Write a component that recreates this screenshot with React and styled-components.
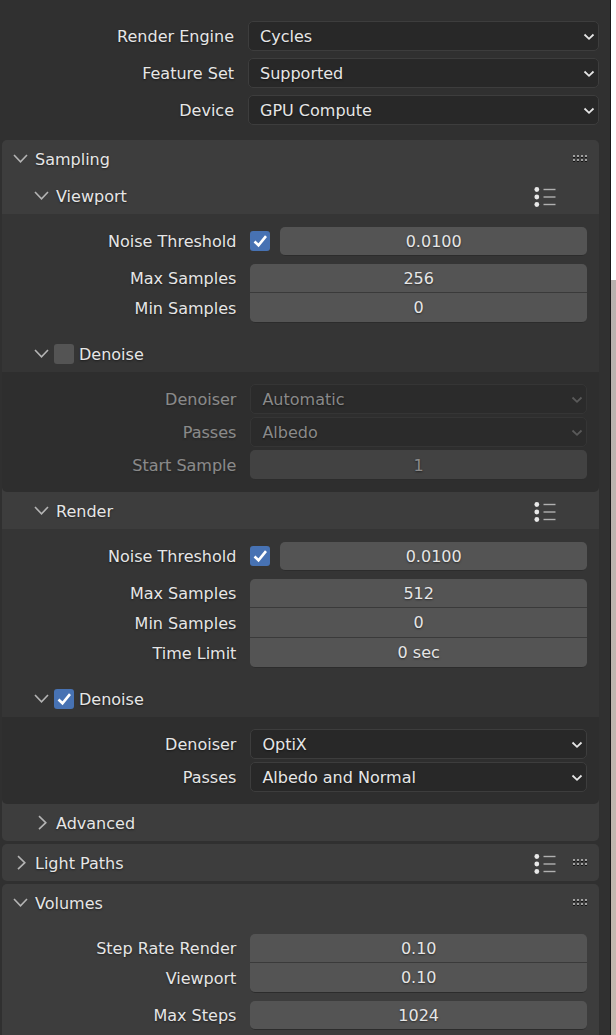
import React, { useId, useState } from "react";
import styled, { createGlobalStyle, css } from "styled-components";

const GlobalStyle = createGlobalStyle`
  *, *::before, *::after { box-sizing: border-box; }
  body {
    margin: 0;
    background: #303030;
    color: #e6e6e6;
    font: 16px/20px "DejaVu Sans", sans-serif;
    text-shadow: 0 1px 2px rgba(0, 0, 0, 0.5);
  }
  button, input, select { font: inherit; color: inherit; text-shadow: inherit; }
`;

const Window = styled.div`
  display: flex;
  height: 100vh;
`;

const Editor = styled.main`
  flex: 1;
  min-width: 0;
  overflow-y: auto;
  scrollbar-width: none;
  padding: 21px 11px 0 0;
`;

const Backdrop = styled.div`
  flex: none;
  width: 6px;
  border-left: 1px solid #1c1a1a;
  background: linear-gradient(#ffffff 280px, #b9b1ae 280px, #c4b8ae);
`;

const Settings = styled.div`
  display: flex;
  flex-direction: column;
  gap: 7px;
  margin-bottom: 15px;
`;

const Panels = styled.div`
  display: flex;
  flex-direction: column;
  gap: 3px;
  padding-left: 2px;
`;

const Panel = styled.section`
  background: #3d3d3d;
  border-radius: 5px;
`;

const Header = styled.header`
  display: flex;
  align-items: center;
  height: 37px;
  padding-left: ${(p) => (p.$nested ? 30 : 9)}px;
  padding-right: 11px;
`;

const Toggle = styled.button`
  display: flex;
  align-items: center;
  gap: 6px;
  padding: 0;
  border: 0;
  background: none;
  cursor: pointer;
`;

const Title = styled.span`
  padding-top: 2px;
`;

const Tools = styled.div`
  display: flex;
  align-items: center;
  gap: 16px;
  margin-left: auto;
  padding-right: ${(p) => (p.$inset ? 31 : 0)}px;
`;

const IconButton = styled.button`
  display: flex;
  padding: 2px 0 0;
  border: 0;
  background: none;
  cursor: pointer;
`;

const HeaderCheck = styled.label`
  display: flex;
  align-items: center;
  gap: 5px;
  margin-left: 4px;
`;

const Body = styled.div`
  display: flex;
  flex-direction: column;
  gap: 8px;
  padding: 13px 12px 12px 10px;
`;

const SubPanel = styled.div`
  background: #353535;
`;

const InnerBody = styled.div`
  display: flex;
  flex-direction: column;
  gap: 3px;
  padding: 12px 12px 12px 10px;
  background: #2e2e2e;
  border-radius: 0 0 5px 5px;
`;

const InnerWell = styled.div`
  background: #3d3d3d;
`;

const Group = styled.div`
  display: flex;
  flex-direction: column;
`;

const Row = styled.div`
  display: grid;
  grid-template-columns: minmax(0, 2fr) minmax(0, 3fr);
  column-gap: 14px;
  align-items: center;
  height: 30px;

  ${(p) => p.$number && css`
    &:first-child { height: 29px; }
  `}
`;

const Label = styled.label`
  padding-top: 1px;
  text-align: right;
  white-space: nowrap;
  opacity: ${(p) => (p.$disabled ? 0.5 : 1)};
`;

const FieldCell = styled.div`
  display: flex;
  align-items: center;
  gap: 10px;
  height: 100%;

  & > span { margin-bottom: 1px; }
`;

const NumberInput = styled.input`
  flex: 1;
  min-width: 0;
  height: 100%;
  padding: 0;
  border: 0;
  border-bottom: 1px solid #3a3a3a;
  border-radius: 0;
  background: #545454;
  text-align: center;

  ${Row}:first-child & { border-top-left-radius: 5px; border-top-right-radius: 5px; }
  ${Row}:last-child & {
    border-bottom-left-radius: 5px;
    border-bottom-right-radius: 5px;
    border-bottom-color: #2c2c2c;
  }
  ${(p) => p.$alone && css`
    && { border-radius: 5px; padding-top: 1px; }
  `}
  &:disabled { background: #424242; color: #8a8a8a; }
`;

const SelectWrap = styled.div`
  display: grid;
  align-items: center;
  width: 100%;
  height: 100%;

  & > * { grid-area: 1 / 1; }
  & > svg { justify-self: end; margin: 2px 4px 0 0; pointer-events: none; }
`;

const Select = styled.select`
  appearance: none;
  width: 100%;
  height: 30px;
  padding: 2px 24px 0 11px;
  border: 1px solid #3d3d3d;
  border-radius: 5px;
  background: #282828;

  &:disabled {
    background: #2b2b2b;
    border-color: #353535;
    color: #8a8a8a;
    opacity: 1;
  }
`;

const CheckWrap = styled.span`
  display: grid;
  place-items: center;
  width: 20px;
  height: 20px;

  & > * { grid-area: 1 / 1; }
  & > svg { pointer-events: none; visibility: hidden; }
  & > input:checked + svg { visibility: visible; }
`;

const CheckInput = styled.input`
  appearance: none;
  width: 20px;
  height: 20px;
  margin: 0;
  border-radius: 3px;
  background: #545454;
  &:checked { background: #4772b3; }
`;

function Arrow({ open }) {
  return (
    <svg width="18" height="18" viewBox="0 0 18 18" fill="none" stroke="#b4b4b4" strokeWidth="1.6" aria-hidden="true">
      <path d={open ? "M3 5 L9.5 11.8 L16 5" : "M7 2.2 L13.8 8.7 L7 15.2"} />
    </svg>
  );
}

function SelectArrow({ disabled }) {
  return (
    <svg width="12" height="8" viewBox="0 0 12 8" fill="none" stroke={disabled ? "#5a5a5a" : "#e6e6e6"} strokeWidth="1.8" aria-hidden="true">
      <path d="M1.5 1.5 L6 5.8 L10.5 1.5" />
    </svg>
  );
}

function PresetIcon() {
  return (
    <svg width="24" height="22" viewBox="0 0 24 22" aria-hidden="true">
      {[3.5, 11, 18.5].map((y) => (
        <g key={y}>
          <circle cx="3.8" cy={y} r="2.4" fill="#e8e8e8" />
          <path d={`M10.5 ${y} H22.5`} stroke="#b0b0b0" strokeWidth="1.4" />
        </g>
      ))}
    </svg>
  );
}

function Grip() {
  const columns = [0, 4, 8, 12];
  return (
    <svg width="15" height="8" viewBox="0 0 15 8" shapeRendering="crispEdges" aria-hidden="true">
      {[0, 4].map((y) =>
        columns.map((x) => (
          <g key={`${x}-${y}`}>
            <rect x={x} y={y + 2} width="2" height="1" fill="#141414" />
            <rect x={x} y={y} width="2" height="2" fill="#a0a0a0" />
          </g>
        ))
      )}
    </svg>
  );
}

function Check({ defaultChecked, ...rest }) {
  return (
    <CheckWrap>
      <CheckInput type="checkbox" defaultChecked={defaultChecked} {...rest} />
      <svg width="20" height="20" viewBox="0 0 20 20" fill="none" stroke="#ffffff" strokeWidth="2.6" aria-hidden="true">
        <path d="M4.5 10.5 L8.5 14.3 L16 5.2" />
      </svg>
    </CheckWrap>
  );
}

function NumberRow({ label, value, disabled, check, alone }) {
  const id = useId();
  return (
    <Row $number>
      <Label htmlFor={id} $disabled={disabled}>{label}</Label>
      <FieldCell>
        {check && <Check defaultChecked aria-label={`Use ${label}`} />}
        <NumberInput id={id} defaultValue={value} disabled={disabled} $alone={alone} />
      </FieldCell>
    </Row>
  );
}

function SelectRow({ label, value, disabled }) {
  const id = useId();
  return (
    <Row>
      <Label htmlFor={id} $disabled={disabled}>{label}</Label>
      <SelectWrap>
        <Select id={id} disabled={disabled}>
          <option>{value}</option>
        </Select>
        <SelectArrow disabled={disabled} />
      </SelectWrap>
    </Row>
  );
}

function Section({ title, nested, defaultOpen = false, presets, grip, children }) {
  const [open, setOpen] = useState(defaultOpen);
  return (
    <>
      <Header $nested={nested}>
        <Toggle type="button" aria-expanded={open} onClick={() => setOpen(!open)}>
          <Arrow open={open} />
          <Title>{title}</Title>
        </Toggle>
        <Tools $inset={!grip}>
          {presets && <IconButton type="button" aria-label={`${title} presets`}><PresetIcon /></IconButton>}
          {grip && <Grip />}
        </Tools>
      </Header>
      {open && children}
    </>
  );
}

function DenoiseSection({ enabled, children }) {
  const [open, setOpen] = useState(true);
  return (
    <>
      <Header $nested>
        <Toggle type="button" aria-label="Denoise settings" aria-expanded={open} onClick={() => setOpen(!open)}>
          <Arrow open={open} />
        </Toggle>
        <HeaderCheck>
          <Check defaultChecked={enabled} />
          <Title>Denoise</Title>
        </HeaderCheck>
      </Header>
      {open && <InnerWell><InnerBody>{children}</InnerBody></InnerWell>}
    </>
  );
}

export default function App() {
  return (
    <>
      <GlobalStyle />
      <Window>
        <Editor>
          <Settings>
            <SelectRow label="Render Engine" value="Cycles" />
            <SelectRow label="Feature Set" value="Supported" />
            <SelectRow label="Device" value="GPU Compute" />
          </Settings>
          <Panels>
            <Panel>
              <Section title="Sampling" defaultOpen grip>
                <Section title="Viewport" nested defaultOpen presets>
                  <SubPanel>
                    <Body>
                      <Group>
                        <NumberRow label="Noise Threshold" value="0.0100" check />
                      </Group>
                      <Group>
                        <NumberRow label="Max Samples" value="256" />
                        <NumberRow label="Min Samples" value="0" />
                      </Group>
                    </Body>
                    <DenoiseSection enabled={false}>
                      <SelectRow label="Denoiser" value="Automatic" disabled />
                      <SelectRow label="Passes" value="Albedo" disabled />
                      <NumberRow label="Start Sample" value="1" disabled alone />
                    </DenoiseSection>
                  </SubPanel>
                </Section>
                <Section title="Render" nested defaultOpen presets>
                  <SubPanel>
                    <Body>
                      <Group>
                        <NumberRow label="Noise Threshold" value="0.0100" check />
                      </Group>
                      <Group>
                        <NumberRow label="Max Samples" value="512" />
                        <NumberRow label="Min Samples" value="0" />
                        <NumberRow label="Time Limit" value="0 sec" />
                      </Group>
                    </Body>
                    <DenoiseSection enabled>
                      <SelectRow label="Denoiser" value="OptiX" />
                      <SelectRow label="Passes" value="Albedo and Normal" />
                    </DenoiseSection>
                  </SubPanel>
                </Section>
                <Section title="Advanced" nested />
              </Section>
            </Panel>
            <Panel>
              <Section title="Light Paths" presets grip />
            </Panel>
            <Panel>
              <Section title="Volumes" defaultOpen grip>
                <Body>
                  <Group>
                    <NumberRow label="Step Rate Render" value="0.10" />
                    <NumberRow label="Viewport" value="0.10" />
                  </Group>
                  <Group>
                    <NumberRow label="Max Steps" value="1024" />
                  </Group>
                </Body>
              </Section>
            </Panel>
          </Panels>
        </Editor>
        <Backdrop />
      </Window>
    </>
  );
}
